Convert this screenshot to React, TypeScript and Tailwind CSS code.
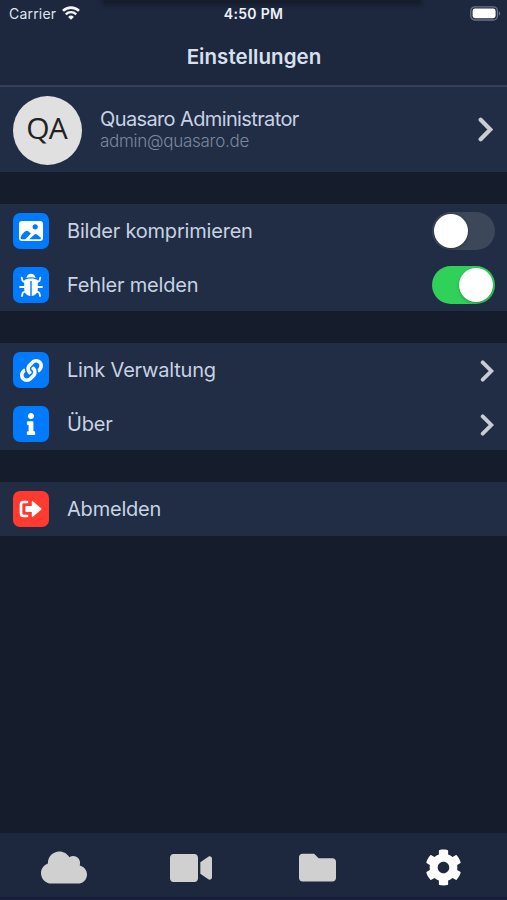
import type { ReactNode } from "react";
import { FaCloud, FaCog, FaFolder, FaInfo, FaLink, FaVideo } from "react-icons/fa";

function WifiIcon() {
  return (
    <svg viewBox="0 0 18 14" className="h-[14px] w-[18px]" fill="none" stroke="#f4f6fa">
      <path d="M1 4.900a11.400 11.400 0 0 1 16 0" strokeWidth="2.600" />
      <path d="M3.800 8.300a7.400 7.400 0 0 1 10.400 0" strokeWidth="2.400" />
      <path d="M9 13.800 6.100 10.900a4.200 4.200 0 0 1 5.800 0Z" fill="#f4f6fa" stroke="none" />
    </svg>
  );
}

function BatteryIcon() {
  return (
    <svg viewBox="0 0 31 15" className="h-[15px] w-[31px]">
      <rect x="0.8" y="0.8" width="26.600" height="13.200" rx="4" fill="none" stroke="#6b7284" strokeWidth="1.300" />
      <rect x="2.600" y="2.600" width="23" height="9.600" rx="2.400" fill="#fff" />
      <path d="M28.800 5.200c2 .8 2 3.600 0 4.400Z" fill="#6b7284" />
    </svg>
  );
}

function PhotoIcon() {
  return (
    <svg viewBox="0 0 24 20" className="h-5 w-6">
      <rect width="24" height="20" rx="3" fill="#fff" />
      <circle cx="16.200" cy="5.800" r="2.600" fill="#007aff" />
      <path
        d="M1.600 16.400c.6-2.200 2.800-4.600 4.700-6.100 1-.8 2-.8 3 0l2.600 2.300-5 5.100c-.5.5-.9.6-1.500.6H3.500c-1.300 0-2.100-.8-1.900-1.900Z"
        fill="#007aff"
      />
      <path d="M10.200 18.300l5.300-4.700c.8-.7 1.700-.7 2.500 0l4.200 3.500c-.4.900-1 1.200-1.900 1.200Z" fill="#007aff" />
    </svg>
  );
}

function BugIcon() {
  return (
    <svg viewBox="0 0 24 24" className="h-6 w-6" fill="#fff">
      <path d="M7.400 4.900C8 2 9.800.8 12 .8s4 1.200 4.600 4.100c-2.700-1-6.500-1-9.200 0Z" />
      <path d="M11.300 8v15c-3.800-.4-6.100-3.200-6.100-7.500V7.200c1.700-1 3.900-1.600 6.800-1.600s5.100.6 6.800 1.600v8.300c0 4.300-2.300 7.100-6.100 7.500V8Z" />
      <path
        d="M6.200 9.400 3.500 7.800 2.700 4.600M17.800 9.400l2.700-1.600.8-3.200M6 14H1M18 14h5M6.500 18.200l-2.700 1.600-.9 3.200M17.500 18.200l2.700 1.600.9 3.200"
        fill="none"
        stroke="#fff"
        strokeWidth="1.800"
        strokeLinecap="round"
        strokeLinejoin="round"
      />
    </svg>
  );
}

function LogoutIcon() {
  return (
    <svg viewBox="0 0 24 18" className="h-[18px] w-6" fill="#fff">
      <path d="M8 2H4.700C3 2 2 3 2 4.700v8.600C2 15 3 16 4.700 16H8" fill="none" stroke="#fff" strokeWidth="2.700" strokeLinecap="round" />
      <path d="M7.200 5.900h5.600V2c0-.8.8-1.200 1.400-.6l7.900 6.900c.4.400.4 1 0 1.400l-7.900 6.900c-.6.600-1.400.2-1.400-.6v-3.900H7.200c-.5 0-.8-.3-.8-.8V6.700c0-.5.3-.8.8-.8Z" />
    </svg>
  );
}

function Chevron({ className }: { className: string }) {
  return (
    <svg viewBox="0 0 14 23" className={className} fill="none">
      <path d="M2.500 2.500 11.500 11.500 2.500 20.500" stroke="#c9ccd3" strokeWidth="4" strokeLinecap="round" />
    </svg>
  );
}

function Toggle({ on }: { on: boolean }) {
  return (
    <div className={`-mr-px flex h-[38px] w-[63px] items-center rounded-full px-[2px] ${on ? "justify-end bg-[#30d158]" : "bg-[#3c4759]"}`}>
      <div className="h-[34px] w-[34px] rounded-full bg-white shadow-[0_1px_3px_rgba(0,0,0,0.3)]" />
    </div>
  );
}

interface RowProps {
  icon: ReactNode;
  label: string;
  danger?: boolean;
  children?: ReactNode;
}

function Row({ icon, label, danger, children }: RowProps) {
  return (
    <div className="flex h-[53.800px] items-center pt-[1.200px] pr-[13px] pl-[13px]">
      <div className={`flex h-9 w-9 items-center justify-center rounded-[7px] text-white ${danger ? "bg-[#ff3b30]" : "bg-[#007aff]"}`}>
        {icon}
      </div>
      <span className="ml-[18px] flex-1 text-[20px] tracking-[-0.2px] text-[#c8d2e2]">{label}</span>
      {children}
    </div>
  );
}

function Group({ children }: { children: ReactNode }) {
  return <section className="bg-[#202d45]">{children}</section>;
}

export default function App() {
  return (
    <div className="flex h-[900px] w-[507px] flex-col overflow-hidden bg-[#151c2b] font-['Inter',sans-serif]">
      <header className="h-[87px] border-b-2 border-[#344056] bg-[#1d283e]">
        <div className="mx-auto -mb-1 h-[3px] w-[316px] translate-x-2 bg-[#151c2b] shadow-[0_0_5px_2px_#151c2b]" />
        <div className="relative grid h-7 grid-cols-3 items-center pr-[6px] pl-[9px] text-[14px] text-[#dfe5ee]">
          <div className="flex items-center gap-[6px]">
            <span className="tracking-[0.2px]">Carrier</span>
            <WifiIcon />
          </div>
          <span className="-ml-[3px] text-center font-semibold tracking-[0.3px] text-[#eef1f6]">4:50 PM</span>
          <div className="flex justify-end">
            <BatteryIcon />
          </div>
        </div>
        <h1 className="mt-[16px] pl-px text-center text-[20.500px] leading-7 font-semibold tracking-[0.050px] text-[#d8e0f0]">
          Einstellungen
        </h1>
      </header>

      <main className="flex flex-1 flex-col gap-[31.600px]">
        <Group>
          <div className="flex h-[85px] items-center pr-[14px] pl-[13px]">
            <div className="mt-[2px] flex h-[69px] w-[69px] items-center justify-center rounded-full bg-[#e0e0e0] pr-[2px] pb-[6px] font-['Open_Sans',sans-serif] text-[30px] tracking-[-0.800px] text-[#222]">
              QA
            </div>
            <div className="-mt-px ml-[18px] flex-1">
              <div className="text-[20px] leading-[23px] tracking-[-0.620px] text-[#c8d2e2]">Quasaro Administrator</div>
              <div className="text-[17px] leading-5 font-light tracking-[-0.270px] text-[#7c879b]">admin@quasaro.de</div>
            </div>
            <Chevron className="h-[25px] w-[15px]" />
          </div>
        </Group>

        <Group>
          <Row icon={<PhotoIcon />} label="Bilder komprimieren">
            <Toggle on={false} />
          </Row>
          <Row icon={<BugIcon />} label="Fehler melden">
            <Toggle on />
          </Row>
        </Group>

        <Group>
          <Row icon={<FaLink size={23} />} label="Link Verwaltung">
            <Chevron className="mt-[2px] h-[22px] w-[14px]" />
          </Row>
          <Row icon={<FaInfo size={22} className="-ml-px" />} label="Über">
            <Chevron className="mt-[2px] h-[22px] w-[14px]" />
          </Row>
        </Group>

        <Group>
          <Row icon={<LogoutIcon />} label="Abmelden" danger />
        </Group>
      </main>

      <nav className="grid h-[67px] grid-cols-4 items-center justify-items-center border-b-[3px] border-[#171f3a] bg-[#1d283e] pt-[5px] pl-px text-[#d0d0d0]">
        <FaCloud className="h-[37px] w-[46px]" />
        <FaVideo className="h-[38px] w-[42px]" />
        <FaFolder className="h-[37px] w-[37px]" />
        <FaCog className="h-[37px] w-[37px] text-white" />
      </nav>
    </div>
  );
}
